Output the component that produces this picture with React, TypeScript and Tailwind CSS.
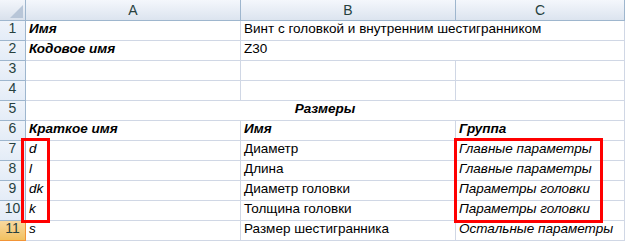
import React from 'react';

type Cell = { text?: string; style?: 'bi' | 'i' | ''; span?: number; center?: boolean };
type Row = { n: number; cells: Cell[]; selected?: boolean };

const rows: Row[] = [
  { n: 1, cells: [{ text: 'Имя', style: 'bi' }, { text: 'Винт с головкой и внутренним шестигранником', span: 2 }] },
  { n: 2, cells: [{ text: 'Кодовое имя', style: 'bi' }, { text: 'Z30', span: 2 }] },
  { n: 3, cells: [{}, {}, {}] },
  { n: 4, cells: [{}, {}, {}] },
  { n: 5, cells: [{ text: 'Размеры', style: 'bi', span: 3, center: true }] },
  { n: 6, cells: [{ text: 'Краткое имя', style: 'bi' }, { text: 'Имя', style: 'bi' }, { text: 'Группа', style: 'bi' }] },
  { n: 7, cells: [{ text: 'd', style: 'i' }, { text: 'Диаметр' }, { text: 'Главные параметры', style: 'i' }] },
  { n: 8, cells: [{ text: 'l', style: 'i' }, { text: 'Длина' }, { text: 'Главные параметры', style: 'i' }] },
  { n: 9, cells: [{ text: 'dk', style: 'i' }, { text: 'Диаметр головки' }, { text: 'Параметры головки', style: 'i' }] },
  { n: 10, cells: [{ text: 'k', style: 'i' }, { text: 'Толщина головки' }, { text: 'Параметры головки', style: 'i' }] },
  { n: 11, cells: [{ text: 's', style: 'i' }, { text: 'Размер шестигранника' }, { text: 'Остальные параметры', style: 'i' }], selected: true },
];

const spanClass: Record<number, string> = { 1: 'col-span-1', 2: 'col-span-2', 3: 'col-span-3' };

export default function App() {
  return (
    <div className="relative w-[625px] h-[242px] overflow-hidden bg-white text-[13.5px] text-black" style={{ fontFamily: '"Liberation Sans", Arial, sans-serif' }}>
      <div className="grid grid-cols-[26px_215px_215px_1fr] auto-rows-[20px] grid-rows-[21px]">
        {/* corner */}
        <div className="relative border-r border-b border-[#9eb6ce] bg-gradient-to-b from-[#f3f6fb] to-[#d9e1ec]">
          <div className="absolute right-[2px] bottom-[2px] w-0 h-0 border-l-[13px] border-l-transparent border-b-[13px] border-b-[#b8c6d8]" />
        </div>
        {['A', 'B', 'C'].map((c) => (
          <div key={c} className="flex items-center justify-center border-r border-b border-[#9eb6ce] bg-gradient-to-b from-[#f4f7fc] to-[#dce4ef] text-[14px] text-[#27413e]">
            {c}
          </div>
        ))}
        {rows.map((r) => (
          <React.Fragment key={r.n}>
            <div
              className={`flex items-end justify-center pb-[1px] border-r border-b text-[14px] ${
                r.selected
                  ? 'bg-gradient-to-b from-[#f9d99f] to-[#f1c15f] border-[#f29436] text-[#27413e]'
                  : 'bg-gradient-to-b from-[#eef3fa] to-[#e4ecf7] border-[#9eb6ce] text-[#27413e]'
              }`}
            >
              {r.n}
            </div>
            {r.cells.map((c, i) => (
              <div
                key={i}
                className={`flex items-end pb-[1px] px-[3px] whitespace-nowrap border-r border-b border-[#d0d7e5] ${spanClass[c.span ?? 1]} ${
                  c.center ? 'justify-center' : ''
                } ${c.style === 'bi' ? 'font-bold italic' : c.style === 'i' ? 'italic' : ''}`}
              >
                {c.text}
              </div>
            ))}
          </React.Fragment>
        ))}
      </div>
      {/* highlight frames */}
      <div className="absolute left-[21px] top-[138px] w-[29px] h-[85px] border-[3px] border-[#ff0000]" />
      <div className="absolute left-[454px] top-[138px] w-[149px] h-[85px] border-[3px] border-[#ff0000]" />
    </div>
  );
}
